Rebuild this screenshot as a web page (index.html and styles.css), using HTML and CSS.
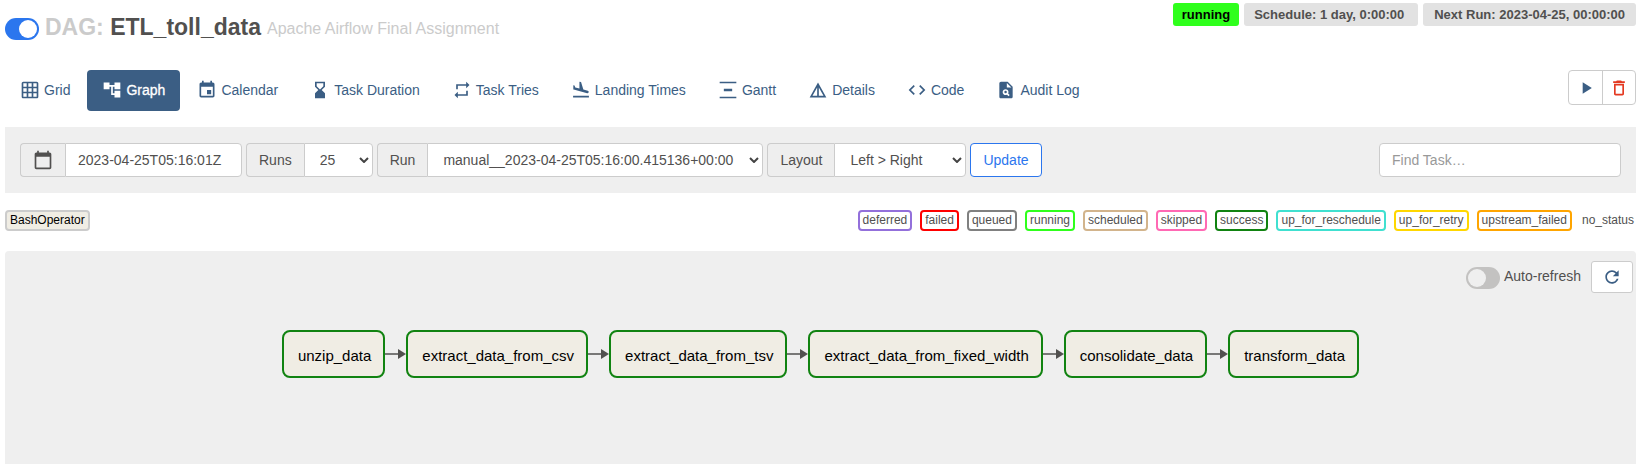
FILE: index.html
```
<!DOCTYPE html>
<html lang="en">
<head>
<meta charset="utf-8">
<title>ETL_toll_data - Graph</title>
<link rel="stylesheet" href="styles.css">
</head>
<body>
<header class="header">
  <div class="heading">
    <input class="switch" type="checkbox" aria-label="Pause or unpause DAG" checked>
    <h1 class="title"><span class="muted">DAG:</span> ETL_toll_data</h1>
    <span class="subtitle">Apache Airflow Final Assignment</span>
  </div>
  <div class="badges">
    <a class="badge badge-running" href="#">running</a>
    <a class="badge badge-schedule" href="#">Schedule: 1 day, 0:00:00</a>
    <span class="badge">Next Run: 2023-04-25, 00:00:00</span>
  </div>
</header>

<div class="toolbar">
  <nav class="tabs">
    <a class="tab" href="#"><svg class="icon" viewBox="0 0 24 24"><path d="M20 2H4c-1.1 0-2 .9-2 2v16c0 1.1.9 2 2 2h16c1.1 0 2-.9 2-2V4c0-1.1-.9-2-2-2zM8 20H4v-4h4v4zm0-6H4v-4h4v4zm0-6H4V4h4v4zm6 12h-4v-4h4v4zm0-6h-4v-4h4v4zm0-6h-4V4h4v4zm6 12h-4v-4h4v4zm0-6h-4v-4h4v4zm0-6h-4V4h4v4z"/></svg>Grid</a>
    <a class="tab tab-active" href="#"><svg class="icon" viewBox="0 0 24 24"><path d="M22 11V3h-7v3H9V3H2v8h7V8h2v10h4v3h7v-8h-7v3h-2V8h2v3z"/></svg>Graph</a>
    <a class="tab" href="#"><svg class="icon" viewBox="0 0 24 24"><path d="M17 12h-5v5h5v-5zM16 1v2H8V1H6v2H5c-1.11 0-1.99.9-1.99 2L3 19c0 1.1.89 2 2 2h14c1.1 0 2-.9 2-2V5c0-1.1-.9-2-2-2h-1V1h-2zm3 18H5V8h14v11z"/></svg>Calendar</a>
    <a class="tab" href="#"><svg class="icon" viewBox="0 0 24 24"><path d="M18 22l-.01-6L14 12l3.99-4.01L18 2H6v6l4 4-4 3.99V22h12zM8 7.5V4h8v3.5l-4 4-4-4z"/></svg>Task Duration</a>
    <a class="tab" href="#"><svg class="icon" viewBox="0 0 24 24"><path d="M7 7h10v3l4-4-4-4v3H5v6h2V7zm10 10H7v-3l-4 4 4 4v-3h12v-6h-2v4z"/></svg>Task Tries</a>
    <a class="tab" href="#"><svg class="icon" viewBox="0 0 24 24"><path d="M2.5 19h19v2h-19zM9.68 13.27l4.35 1.16 5.31 1.42c.8.21 1.62-.26 1.84-1.06.21-.8-.26-1.62-1.06-1.84l-5.31-1.42-2.76-9.02L10.12 2v8.28L5.15 8.95l-.93-2.32-1.45-.39v5.17l1.6.43 5.31 1.43z"/></svg>Landing Times</a>
    <a class="tab" href="#"><svg class="icon" viewBox="0 0 24 24"><path d="M22 2v2H2V2h20zM7 10.5v3h10v-3H7zM2 20v2h20v-2H2z"/></svg>Gantt</a>
    <a class="tab" href="#"><svg class="icon" viewBox="0 0 24 24"><path d="M12 3L2 21h20L12 3zm1 5.92L18.6 19H13V8.92zm-2 0V19H5.4L11 8.92z"/></svg>Details</a>
    <a class="tab" href="#"><svg class="icon" viewBox="0 0 24 24"><path d="M9.4 16.6L4.8 12l4.6-4.6L8 6l-6 6 6 6 1.4-1.4zm5.2 0l4.6-4.6-4.6-4.6L16 6l6 6-6 6-1.4-1.4z"/></svg>Code</a>
    <a class="tab" href="#"><svg class="icon" viewBox="0 0 24 24"><path fill-rule="evenodd" d="M14 2H6c-1.1 0-2 .9-2 2v16c0 1.1.9 2 2 2h12c1.1 0 2-.9 2-2V8l-6-6zm1.04 17.45l-1.88-1.88c-1.33.71-3.01.53-4.13-.59-1.37-1.37-1.37-3.58 0-4.95 1.37-1.37 3.58-1.37 4.95 0 1.12 1.12 1.31 2.8.59 4.13l1.88 1.88-1.41 1.41zM13 9V3.5L18.5 9H13zM11.5 13a1.5 1.5 0 1 0 0 3 1.5 1.5 0 0 0 0-3z"/></svg>Audit Log</a>
  </nav>
  <div class="actions">
    <button class="action" type="button" aria-label="Trigger DAG"><svg class="icon" viewBox="0 0 24 24"><path d="M8 5v14l11-7z"/></svg></button>
    <button class="action action-delete" type="button" aria-label="Delete DAG"><svg class="icon" viewBox="0 0 24 24"><path d="M6 19c0 1.1.9 2 2 2h8c1.1 0 2-.9 2-2V7H6v12zM8 9h8v10H8V9zm7.5-5l-1-1h-5l-1 1H5v2h14V4h-3.5z"/></svg></button>
  </div>
</div>

<form class="filters">
  <div class="group">
    <label class="addon" for="base-date" aria-label="Base date"><svg class="icon" viewBox="0 0 24 24"><path d="M20 3h-1V1h-2v2H7V1H5v2H4c-1.1 0-2 .9-2 2v16c0 1.1.9 2 2 2h16c1.1 0 2-.9 2-2V5c0-1.1-.9-2-2-2zm0 18H4V8h16v13z"/></svg></label>
    <input class="field field-date" id="base-date" type="text" value="2023-04-25T05:16:01Z">
  </div>
  <div class="group">
    <label class="addon" for="runs">Runs</label>
    <div class="picker picker-runs">
      <select class="field" id="runs"><option>25</option></select>
      <svg class="chevron" viewBox="0 0 10 6"><path d="M1 1l4 4 4-4"/></svg>
    </div>
  </div>
  <div class="group">
    <label class="addon" for="run">Run</label>
    <div class="picker picker-run">
      <select class="field" id="run"><option>manual__2023-04-25T05:16:00.415136+00:00</option></select>
      <svg class="chevron" viewBox="0 0 10 6"><path d="M1 1l4 4 4-4"/></svg>
    </div>
  </div>
  <div class="group">
    <label class="addon" for="layout">Layout</label>
    <div class="picker picker-layout">
      <select class="field" id="layout"><option>Left &gt; Right</option></select>
      <svg class="chevron" viewBox="0 0 10 6"><path d="M1 1l4 4 4-4"/></svg>
    </div>
  </div>
  <button class="update" type="button">Update</button>
  <input class="field search" type="text" placeholder="Find Task…" aria-label="Find Task">
</form>

<div class="legend">
  <span class="tag operator">BashOperator</span>
  <div class="states">
    <span class="tag deferred">deferred</span>
    <span class="tag failed">failed</span>
    <span class="tag queued">queued</span>
    <span class="tag running">running</span>
    <span class="tag scheduled">scheduled</span>
    <span class="tag skipped">skipped</span>
    <span class="tag success">success</span>
    <span class="tag reschedule">up_for_reschedule</span>
    <span class="tag retry">up_for_retry</span>
    <span class="tag upstream">upstream_failed</span>
    <span class="tag no-status">no_status</span>
  </div>
</div>

<main class="graph">
  <div class="refresh">
    <label class="auto"><input class="switch" type="checkbox"> Auto-refresh</label>
    <button class="refresh-button" type="button" aria-label="Refresh"><svg class="icon" viewBox="0 0 24 24"><path d="M17.65 6.35C16.2 4.9 14.21 4 12 4c-4.42 0-7.99 3.58-7.99 8s3.57 8 7.99 8c3.73 0 6.84-2.55 7.73-6h-2.08c-.82 2.33-3.04 4-5.65 4-3.31 0-6-2.69-6-6s2.69-6 6-6c1.66 0 3.14.69 4.22 1.78L13 11h7V4l-2.35 2.35z"/></svg></button>
  </div>
  <div class="flow">
    <div class="node">unzip_data</div>
    <svg class="arrow" viewBox="0 0 21 10"><path d="M0 5h14" stroke="#51504f" stroke-width="1.5"/><path d="M13 0l8 5-8 5z" fill="#51504f"/></svg>
    <div class="node">extract_data_from_csv</div>
    <svg class="arrow" viewBox="0 0 21 10"><path d="M0 5h14" stroke="#51504f" stroke-width="1.5"/><path d="M13 0l8 5-8 5z" fill="#51504f"/></svg>
    <div class="node">extract_data_from_tsv</div>
    <svg class="arrow" viewBox="0 0 21 10"><path d="M0 5h14" stroke="#51504f" stroke-width="1.5"/><path d="M13 0l8 5-8 5z" fill="#51504f"/></svg>
    <div class="node">extract_data_from_fixed_width</div>
    <svg class="arrow" viewBox="0 0 21 10"><path d="M0 5h14" stroke="#51504f" stroke-width="1.5"/><path d="M13 0l8 5-8 5z" fill="#51504f"/></svg>
    <div class="node">consolidate_data</div>
    <svg class="arrow" viewBox="0 0 21 10"><path d="M0 5h14" stroke="#51504f" stroke-width="1.5"/><path d="M13 0l8 5-8 5z" fill="#51504f"/></svg>
    <div class="node">transform_data</div>
  </div>
</main>
</body>
</html>
```
FILE: styles.css
```
* { box-sizing: border-box; }

body {
  margin: 0;
  padding: 3px 8px 0 5px;
  min-height: 100vh;
  display: flex;
  flex-direction: column;
  background: #fff;
  color: #51504f;
  font: 14px/20px "Liberation Sans", Arial, sans-serif;
}

a { color: inherit; text-decoration: none; }
button, input, select { font: inherit; color: inherit; margin: 0; }

.icon { width: 20px; height: 20px; fill: currentColor; flex: none; }

.header { display: flex; justify-content: space-between; align-items: flex-start; height: 67px; }
.heading { display: flex; align-items: center; padding-top: 8px; }
.title { margin: 0 6px; font-size: 23px; line-height: 28px; font-weight: bold; }
.muted { color: #cbcbcb; }
.subtitle { color: #cbcbcb; font-size: 16px; line-height: 28px; padding-top: 4px; }

.switch {
  appearance: none;
  width: 34px;
  height: 22px;
  flex: none;
  border-radius: 11px;
  background: #c3c2c1;
  display: flex;
  align-items: center;
  padding: 2px;
}
.switch::before { content: ""; width: 18px; height: 18px; border-radius: 50%; background: #efefef; }
.switch:checked { background: #2b76ee; justify-content: flex-end; }
.switch:checked::before { background: #fff; }
.heading .switch { margin-top: 4px; }

.badges { display: flex; gap: 5px; }
.badge {
  padding: 0 11px;
  border-radius: 3px;
  background: #e2e2e2;
  font-size: 13px;
  line-height: 23px;
  font-weight: bold;
}
.badge-running { background: #2fff1c; color: #000; padding: 0 9px; }
.badge-schedule { padding: 0 14px 0 10px; }

.toolbar { display: flex; justify-content: space-between; align-items: flex-start; }
.tabs { display: flex; gap: 2px; color: #3b5e84; }
.tab { display: flex; align-items: center; gap: 4px; height: 41px; padding: 0 15px 2px; border-radius: 4px; }
.tab-active { background: #3b5e84; color: #fff; -webkit-text-stroke: 0.3px; }

.actions { display: flex; border: 1px solid #ccc; border-radius: 4px; }
.action {
  display: flex;
  align-items: center;
  justify-content: center;
  width: 33px;
  height: 33px;
  padding: 0;
  border: 0;
  background: none;
  color: #3b5e84;
}
.action-delete { border-left: 1px solid #ccc; color: #e43921; }

.filters {
  display: flex;
  gap: 4px;
  margin-top: 16px;
  padding: 16px 15px;
  background: #efefef;
}
.group { display: flex; }
.addon {
  display: flex;
  align-items: center;
  height: 34px;
  padding: 0 12px;
  border: 1px solid #ccc;
  border-right: 0;
  border-radius: 4px 0 0 4px;
  background: #eee;
}
.field {
  height: 34px;
  padding: 0 12px;
  border: 1px solid #ccc;
  border-radius: 4px;
  background: #fff;
}
.group .field { border-radius: 0 4px 4px 0; }
.field-date { width: 177px; }
.search { width: 242px; margin-left: auto; }
.search::placeholder { color: #999; opacity: 1; }

.picker { display: grid; align-items: center; }
.picker > * { grid-area: 1 / 1; }
.picker .field { appearance: none; width: 100%; padding: 0 15px; }
.picker-runs { width: 69px; }
.picker-run { width: 336px; }
.picker-layout { width: 132px; }
.chevron {
  width: 10px;
  height: 6px;
  margin-right: 4px;
  justify-self: end;
  pointer-events: none;
  fill: none;
  stroke: #444;
  stroke-width: 2;
}

.update {
  height: 34px;
  padding: 0 12px;
  border: 1px solid #2b76ee;
  border-radius: 4px;
  background: #fff;
  color: #2b76ee;
}

.legend { display: flex; justify-content: space-between; margin-top: 17px; }
.states { display: flex; gap: 8px; }
.tag {
  padding: 0 3px;
  border: 2px solid transparent;
  border-radius: 4px;
  font-size: 12px;
  line-height: 17px;
}
.operator { background: #f0ede4; border-color: #ccc; color: #000; }
.deferred { border-color: mediumpurple; }
.failed { border-color: red; }
.queued { border-color: gray; }
.running { border-color: #2fff1c; }
.scheduled { border-color: tan; }
.skipped { border-color: hotpink; }
.success { border-color: #118311; }
.reschedule { border-color: turquoise; }
.retry { border-color: gold; }
.upstream { border-color: orange; }
.no-status { padding: 0; }

.graph {
  flex: 1;
  margin-top: 20px;
  padding: 10px 3px;
  border-radius: 4px 4px 0 0;
  background: #efefef;
}
.refresh { display: flex; justify-content: flex-end; gap: 10px; }
.auto { display: flex; align-items: center; gap: 4px; padding-bottom: 2px; }
.auto .switch { margin-top: 4px; }
.refresh-button {
  display: flex;
  align-items: center;
  justify-content: center;
  width: 42px;
  height: 32px;
  padding: 0;
  border: 1px solid #ccc;
  border-radius: 3px;
  background: #fff;
  color: #3b5e84;
}

.flow { display: flex; justify-content: center; align-items: center; margin-top: 37px; }
.node {
  padding: 4px 12px 0 14px;
  height: 48px;
  border: 2px solid #118311;
  border-radius: 8px;
  background: #f0ede4;
  color: #000;
  font-size: 15px;
  line-height: 40px;
}
.arrow { width: 21px; height: 10px; flex: none; }
```
